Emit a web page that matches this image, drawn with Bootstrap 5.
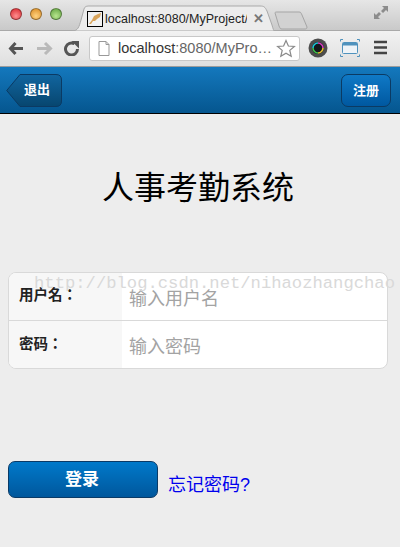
<!DOCTYPE html>
<html lang="zh-CN">
<head>
  <meta charset="utf-8">
  <title>人事考勤系统</title>
  <meta name="viewport" content="width=device-width, initial-scale=1">
  <link href="https://cdn.jsdelivr.net/npm/bootstrap@5.3.2/dist/css/bootstrap.min.css" rel="stylesheet">
  <style>
    html, body { height: 100%; overflow: hidden; }
    body { background: #ededed; font-family: "Liberation Sans", "Noto Sans CJK SC", sans-serif; }

    /* browser chrome */
    .tab-strip { height: 31px; padding-left: 10px; background: linear-gradient(#e6e6e6, #c9c9c9); border-bottom: 1px solid #a9a9a9; }
    .light { width: 12px; height: 12px; border-radius: 50%; border: 1px solid rgba(0,0,0,.35); margin-top: 8px; }
    .light-red { background: radial-gradient(circle at 50% 70%, #ff8f8f, #d8252c); }
    .light-amber { background: radial-gradient(circle at 50% 70%, #ffd27f, #d98a22); }
    .light-green { background: radial-gradient(circle at 50% 70%, #b8e68e, #5fa13e); }
    .tab-svg { position: absolute; left: 72px; top: 5px; }
    .tab-icon { position: absolute; left: 87px; top: 11px; width: 16px; height: 16px; border: 1px solid #000; background: #f2f2f2; }
    .tab-title { position: absolute; left: 105px; top: 10px; width: 142px; font-size: 12.5px; line-height: 18px; color: #222; white-space: nowrap; overflow: hidden; }
    .tab-close { position: absolute; left: 253px; top: 10px; font-size: 13px; line-height: 18px; color: #777; font-weight: 700; }
    .new-tab { position: absolute; left: 274px; top: 11px; }
    .win-expand { position: absolute; left: 373px; top: 5px; }
    .tool-row { height: 36px; background: linear-gradient(#f2f2f2, #dfdfdf); border-bottom: 1px solid #9c9c9c; padding-left: 8px; }
    .url-box { position: absolute; left: 89px; top: 36px; width: 211px; height: 25px; background: #fff; border: 1px solid #c8c8c8; border-radius: 3px; font-size: 14.5px; line-height: 23px; padding-left: 28px; color: #333; white-space: nowrap; }
    .url-box span { color: #666; }
    .chrome-icon { position: absolute; }

    /* app header */
    .app-bar { height: 47px; padding: 7px 9px 6px 6px; background: linear-gradient(#1478bd, #05568f); border-bottom: 1px solid #000; }
    .bar-btn { height: 33px; font-size: 13px; font-weight: 700; color: #fff; line-height: 31px; }
    .btn-back { position: relative; width: 56px; padding-left: 18px; }
    .btn-back svg { position: absolute; left: 0; top: 0; }
    .btn-back span { position: relative; }
    .btn-next { width: 50px; border: 1px solid #0b3a63; border-radius: 7px; text-align: center; background: linear-gradient(#0f79c6, #0058a0); }

    /* page */
    .app-title { margin: 52px 0 0; height: 106px; font-size: 32px; line-height: 44px; font-weight: 400; color: #000; text-align: center; padding-right: 4px; }
    .login-box { margin: 0 12px 0 8px; border: 1px solid #d9d9d9; border-radius: 8px; background: #fff; overflow: hidden; }
    .login-row { height: 47px; }
    .login-row + .login-row { border-top: 1px solid #d9d9d9; height: 48px; }
    .login-row + .login-row .login-label { padding-top: 12px; }
    .login-label { width: 113px; padding: 11px 0 0 10px; background: #f7f7f7; font-family: "Liberation Sans", "Noto Sans CJK TC", sans-serif; font-size: 14.5px; line-height: 22px; font-weight: 700; color: #222; }
    .login-input { flex: 1; min-width: 0; padding: 5px 0 0 7px; border: 0; outline: 0; background: transparent; font-size: 18px; line-height: 24px; }
    .login-input::placeholder { color: #a3a3a3; opacity: 1; }
    .watermark { position: absolute; left: 34px; top: 275px; font-family: "Liberation Mono", monospace; font-size: 17.2px; line-height: 18px; color: #d9d9d9; white-space: nowrap; pointer-events: none; }
    .actions { margin: 92px 0 0 8px; }
    .btn-login { width: 150px; height: 37px; padding: 0 2px 0 0; border: 1px solid #0a3a66; border-radius: 7px; background: linear-gradient(#0079ca, #00579c); color: #fff; font-size: 17px; font-weight: 700; line-height: 33px; }
    .forgot { margin: 12px 0 0 10px; font-size: 18px; line-height: 24px; color: #0000ee; text-decoration: none; }
  </style>
</head>
<body class="position-relative">

<div class="tab-strip d-flex gap-2">
  <div class="light light-red"></div>
  <div class="light light-amber"></div>
  <div class="light light-green"></div>
</div>
<svg class="tab-svg" width="202" height="26" viewBox="0 0 202 26">
  <path d="M0 26 C6 26 7 22 9 15 L12 4 C13 1 15 1 18 1 L188 1 C192 1 193 2 195 6 L200 20 C201 24 202 26 202 26 Z" fill="#ececec" stroke="#a9a9a9"/>
</svg>
<div class="tab-icon">
  <svg width="14" height="14" viewBox="0 0 14 14" class="d-block"><path d="M1 12 L4 8 L6 4 L10 2 L13 1 L12 5 L9 7 L7 9 L5 9 L3 12 Z" fill="#d9a45b"/></svg>
</div>
<div class="tab-title">localhost:8080/MyProject/</div>
<div class="tab-close">✕</div>
<svg class="new-tab" width="34" height="19" viewBox="0 0 34 19">
  <path d="M1 2 C1 1 2 1 3 1 L25 1 C27 1 27 2 28 4 L33 16 C33 18 32 18 30 18 L8 18 C6 18 6 17 5 15 Z" fill="#d2d2d2" stroke="#a5a5a5"/>
</svg>
<svg class="win-expand" width="16" height="15" viewBox="0 0 16 15">
  <path d="M9 1 H15 V7 L13 5 L10 8 L8 6 L11 3 Z M1 8 L3 10 L6 7 L8 9 L5 12 L7 14 H1 Z" fill="#8c8c8c"/>
</svg>

<div class="tool-row"></div>
<svg class="chrome-icon" style="left:8px;top:41px" width="72" height="15" viewBox="0 0 72 15">
  <path d="M7.5 2 L2.5 7.5 L7.5 13 M2.5 7.5 H15" fill="none" stroke="#555" stroke-width="3"/>
  <path d="M37 2 L42.5 7.5 L37 13 M42.5 7.5 H29" fill="none" stroke="#b9b9b9" stroke-width="3"/>
  <path d="M69.5 8 A6 6 0 1 1 66.5 2.8" fill="none" stroke="#555" stroke-width="3"/>
  <path d="M63.5 0 H71 V7.5 Z" fill="#555"/>
</svg>
<div class="url-box">localhost<span>:8080/MyPro…</span></div>
<svg class="chrome-icon" style="left:98px;top:41px" width="12" height="15" viewBox="0 0 12 15">
  <path d="M1 .5 H8 L11 3.5 V14.5 H1 Z M8 .5 V3.5 H11" fill="#fff" stroke="#999"/>
</svg>
<svg class="chrome-icon" style="left:276px;top:39px" width="20" height="19" viewBox="0 0 20 19">
  <path d="M10 1.5 L12.4 7 L18.4 7.5 L13.8 11.4 L15.2 17.3 L10 14.2 L4.8 17.3 L6.2 11.4 L1.6 7.5 L7.6 7 Z" fill="#fff" stroke="#8a8a8a" stroke-width="1.2"/>
</svg>
<svg class="chrome-icon" style="left:308px;top:38px" width="80" height="20" viewBox="0 0 80 20">
  <circle cx="10" cy="10" r="9.5" fill="#4d4d4d"/>
  <circle cx="10" cy="10" r="6" fill="#16181c"/>
  <path d="M5 10 A5 5 0 0 1 10 5" fill="none" stroke="#19c6d8" stroke-width="1.6"/>
  <path d="M10 5 A5 5 0 0 1 15 10" fill="none" stroke="#d83cc0" stroke-width="1.6"/>
  <path d="M15 10 A5 5 0 0 1 10 15" fill="none" stroke="#e8c230" stroke-width="1.6"/>
  <path d="M10 15 A5 5 0 0 1 5 10" fill="none" stroke="#3fc24a" stroke-width="1.6"/>
  <rect x="34.5" y="4.5" width="15" height="11" rx="1" fill="#eef3f7" stroke="#4f92bd"/>
  <rect x="35" y="5" width="14" height="2.5" fill="#4f92bd"/>
  <path d="M32.5 3.5 V1.5 H35 M49 1.5 H51.5 V3.5 M32.5 16.5 V18.5 H35 M49 18.5 H51.5 V16.5" fill="none" stroke="#4f92bd"/>
  <path d="M66 4 H79 M66 9.5 H79 M66 15 H79" stroke="#444" stroke-width="2.4"/>
</svg>

<div class="app-bar d-flex justify-content-between">
  <a class="bar-btn btn-back text-decoration-none">
    <svg width="56" height="33" viewBox="0 0 56 33">
      <defs><linearGradient id="backFill" x1="0" y1="0" x2="0" y2="1"><stop offset="0" stop-color="#11659f"/><stop offset="1" stop-color="#07466f"/></linearGradient></defs>
      <path d="M.7 16.5 L14 .5 H50 Q55.5 .5 55.5 6 V27 Q55.5 32.5 50 32.5 H14 Z" fill="url(#backFill)" stroke="#0b3a63"/>
    </svg>
    <span>退出</span>
  </a>
  <a class="bar-btn btn-next text-decoration-none">注册</a>
</div>

<h1 class="app-title">人事考勤系统</h1>

<div class="login-box">
  <div class="login-row d-flex">
    <label class="login-label" lang="zh-TW">用户名：</label>
    <input class="login-input" type="text" placeholder="输入用户名">
  </div>
  <div class="login-row d-flex">
    <label class="login-label" lang="zh-TW">密码：</label>
    <input class="login-input" type="password" placeholder="输入密码">
  </div>
</div>
<div class="watermark">http://blog.csdn.net/nihaozhangchao</div>

<div class="actions d-flex align-items-start">
  <button class="btn-login" type="button">登录</button>
  <a class="forgot" href="#">忘记密码?</a>
</div>

<script src="https://cdn.jsdelivr.net/npm/bootstrap@5.3.2/dist/js/bootstrap.bundle.min.js"></script>
</body>
</html>
